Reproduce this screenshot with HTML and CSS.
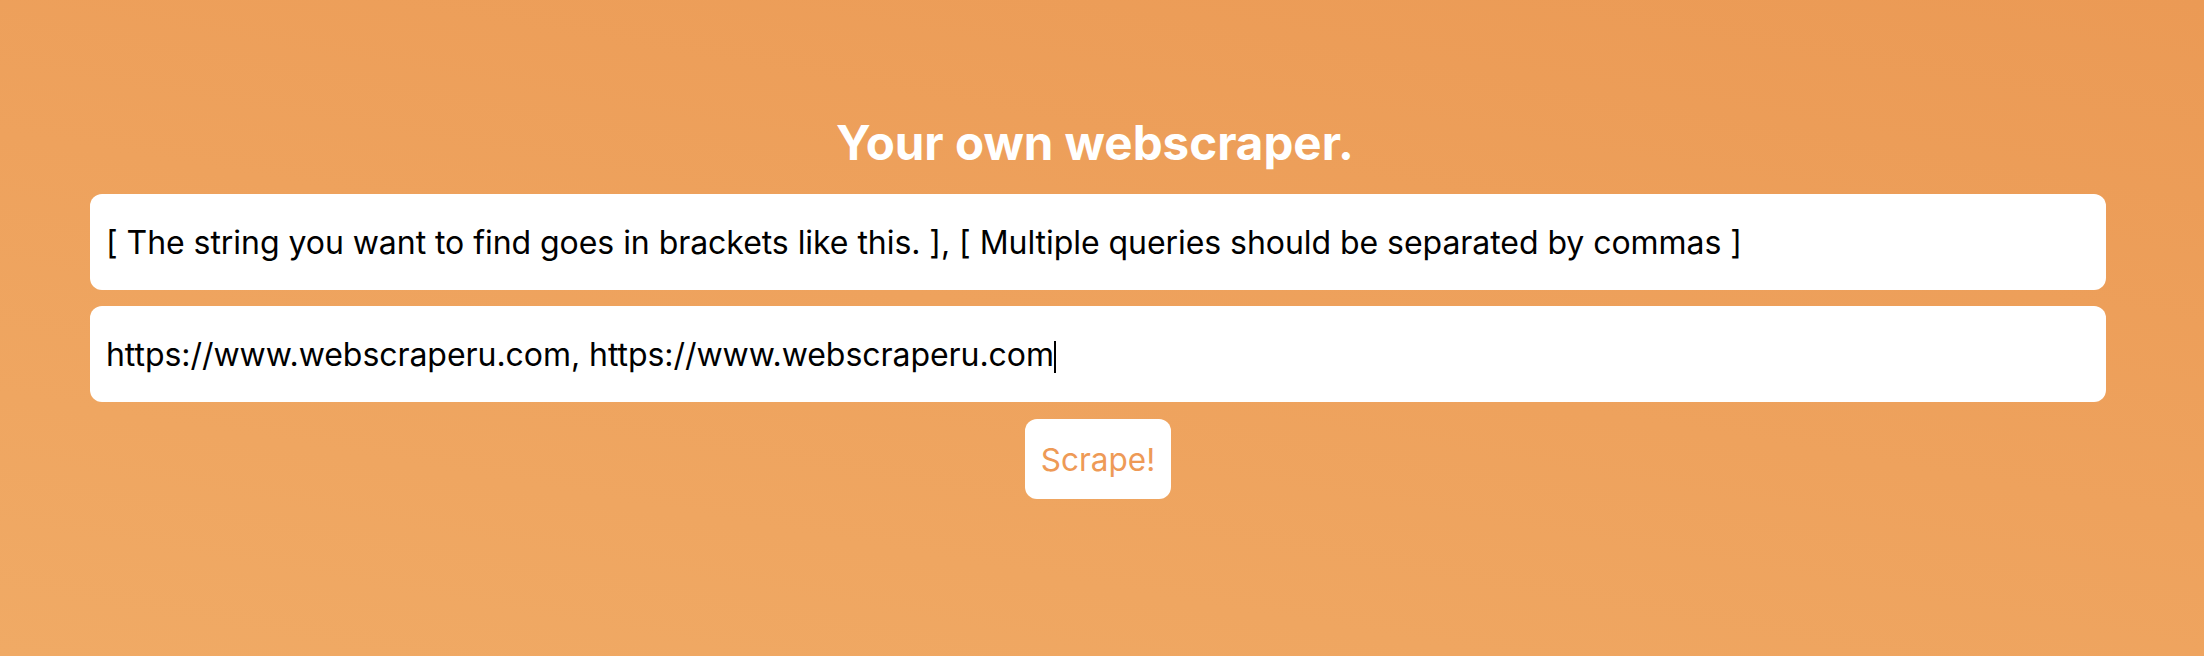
FILE: index.html
```html
<!DOCTYPE html>
<html lang="en">
<head>
<meta charset="utf-8">
<title>Your own webscraper.</title>
<link rel="stylesheet" href="styles.css">
</head>
<body>
<main class="page">
  <h1 class="title">Your own webscraper.</h1>
  <form class="form" onsubmit="return false">
    <input class="field" type="text" value="[ The string you want to find goes in brackets like this. ], [ Multiple queries should be separated by commas ]">
    <div class="field field-active" role="textbox" aria-label="URLs"><span class="field-text">https://www.webscraperu.com, https://www.webscraperu.com</span><span class="caret"></span></div>
    <button class="btn" type="submit">Scrape!</button>
  </form>
</main>
</body>
</html>
```

FILE: styles.css
```css
html, body {
  margin: 0;
  padding: 0;
}
body {
  width: 2204px;
  height: 656px;
  overflow: hidden;
  background: linear-gradient(190deg, #eb9a55 0%, #eea25d 50%, #f0aa65 100%);
  font-family: Inter, "Noto Sans", sans-serif;
}
.page {
  padding: 114px 98px 0 90px;
  display: flex;
  flex-direction: column;
}
.title {
  margin: 0 0 22px;
  text-align: center;
  color: #ffffff;
  font-size: 47.5px;
  line-height: 58px;
  font-weight: 700;
  padding-right: 6px;
}
.form {
  display: flex;
  flex-direction: column;
  align-items: center;
  gap: 16px;
}
.field {
  box-sizing: border-box;
  width: 100%;
  height: 96px;
  border: none;
  outline: none;
  border-radius: 12px;
  background: #ffffff;
  padding: 0 16px;
  font-family: Inter, "Noto Sans", sans-serif;
  font-size: 32px;
  color: #000000;
  letter-spacing: -0.05px;
}
.field-active {
  display: flex;
  align-items: center;
}
.field-text {
  white-space: pre;
}
.caret {
  display: inline-block;
  width: 2px;
  height: 32px;
  margin-top: 6px;
  background: #000000;
}
.btn {
  box-sizing: border-box;
  height: 80px;
  margin-top: 1px;
  padding: 0 16px;
  border: none;
  border-radius: 12px;
  background: #ffffff;
  color: #ee9a56;
  font-family: Inter, "Noto Sans", sans-serif;
  font-size: 31.5px;
  cursor: pointer;
}
```
